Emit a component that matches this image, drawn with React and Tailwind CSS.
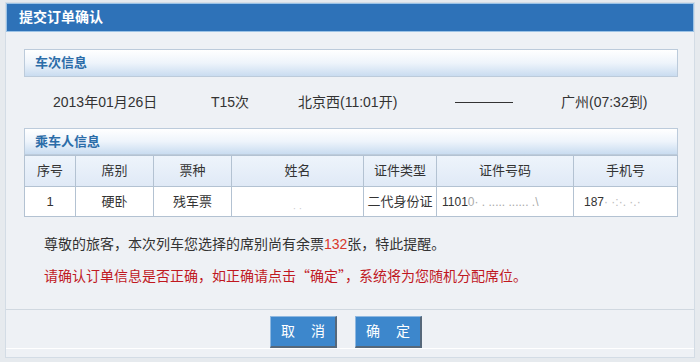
import React from 'react';

const FONT = { fontFamily: '"Liberation Sans", "Noto Sans CJK SC", sans-serif' };
const CJK = { fontFamily: '"Noto Sans CJK SC", sans-serif' };

const COLS = [
  { label: '序号', w: 51 },
  { label: '席别', w: 78 },
  { label: '票种', w: 78 },
  { label: '姓名', w: 132 },
  { label: '证件类型', w: 73 },
  { label: '证件号码', w: 137 },
  { label: '手机号', w: 104 },
];

function SectionHeader({ children, className = '' }) {
  return (
    <div
      className={`flex items-center pl-[10px] border border-[#bccbdb] bg-gradient-to-b from-white via-[#eef4fb] to-[#c9dcf0] text-[13px] font-bold text-[#2b6ca8] ${className}`}
    >
      {children}
    </div>
  );
}

function Button({ a, b }) {
  return (
    <button className="w-[67px] h-[32px] flex items-center justify-between px-[10px] whitespace-nowrap bg-[#3d87cc] text-white text-[14px] border border-t-[#8fb8e0] border-l-[#8fb8e0] border-r-[#56687a] border-b-[#56687a] border-r-2 border-b-2">
      <span>{a}</span>
      <span>{b}</span>
    </button>
  );
}

export default function App() {
  return (
    <div className="w-[700px] h-[362px] bg-[#e6eaee] px-[5px] pt-[2px] overflow-hidden" style={FONT}>
      <div className="h-[356px] bg-[#eef1f5] border border-[#d3dce5] flex flex-col">
        {/* Title bar */}
        <div className="h-[29px] bg-[#2e72b8] border border-[#9cc3e6] flex items-center pl-[12px] text-white text-[14px] font-bold">
          提交订单确认
        </div>

        <div className="pl-[18px] pr-[16px] pt-[17px]">
          {/* 车次信息 */}
          <SectionHeader className="h-[28px]">车次信息</SectionHeader>
          <div className="h-[51px] flex items-center text-[14px] text-[#333]">
            <span className="w-[158px] pl-[29px] box-content">2013年01月26日</span>
            <span className="w-[87px]">T15次</span>
            <span className="w-[157px]">北京西(11:01开)</span>
            <span className="w-[58px] h-px bg-[#333]"></span>
            <span className="ml-[48px]">广州(07:32到)</span>
          </div>

          {/* 乘车人信息 */}
          <SectionHeader className="h-[27px]">乘车人信息</SectionHeader>
          <table className="w-[654px] border-collapse text-[13px] text-[#333] table-fixed">
            <colgroup>
              {COLS.map((c) => (
                <col key={c.label} style={{ width: c.w }} />
              ))}
            </colgroup>
            <thead>
              <tr className="h-[31px] bg-gradient-to-b from-[#eef4fb] to-[#dfe9f6]">
                {COLS.map((c) => (
                  <th key={c.label} className="border border-[#b3c2d2] font-normal text-center">
                    {c.label}
                  </th>
                ))}
              </tr>
            </thead>
            <tbody>
              <tr className="h-[30px] bg-white">
                <td className="border border-[#b3c2d2] text-center">1</td>
                <td className="border border-[#b3c2d2] text-center">硬卧</td>
                <td className="border border-[#b3c2d2] text-center">残军票</td>
                <td className="border border-[#b3c2d2] text-center text-[10px] text-[#ccc] align-bottom">
                  · ·
                </td>
                <td className="border border-[#b3c2d2] text-center">二代身份证</td>
                <td className="border border-[#b3c2d2] pl-[5px] text-[12px] whitespace-nowrap overflow-hidden">
                  1101<span className="text-[#aaa]">0· . ..... ...... .\</span>
                </td>
                <td className="border border-[#b3c2d2] pl-[10px] text-[12px] whitespace-nowrap overflow-hidden">
                  187<span className="text-[#bbb]">· ·:·.  ·.·</span>
                </td>
              </tr>
            </tbody>
          </table>

          {/* Notes */}
          <div className="pl-[20px] text-[14px] leading-[20px]">
            <p className="mt-[17px] text-[#333]">
              尊敬的旅客，本次列车您选择的席别尚有余票<span className="text-[#d9362b]">132</span>张，特此提醒。
            </p>
            <p className="mt-[11px] text-[#c0181f]">
              请确认订单信息是否正确，如正确请点击<span style={CJK}>“</span>确定<span style={CJK}>”</span>，系统将为您随机分配席位。
            </p>
          </div>
        </div>

        {/* Footer */}
        <div className="mt-[23px] border-t border-[#d0d8e0] shadow-[0_1px_0_#fff] flex justify-center gap-[18px] pt-[6px] pr-[8px]">
          <Button a="取" b="消" />
          <Button a="确" b="定" />
        </div>
      </div>
    </div>
  );
}
